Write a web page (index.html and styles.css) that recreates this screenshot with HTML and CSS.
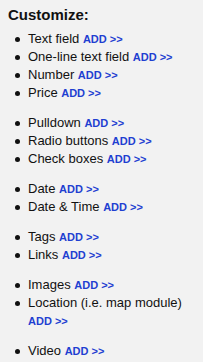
FILE: index.html
```html
<!DOCTYPE html>
<html lang="en">
<head>
    <meta charset="UTF-8">
    <meta name="viewport" content="width=device-width, initial-scale=1.0">
    <title>Customize</title>
    <link rel="stylesheet" href="styles.css">
</head>
<body>
    <div class="panel">
        <h3>Customize:</h3>

        <ul class="field-list">
            <li>Text field <a href="#" class="add-link">ADD &gt;&gt;</a></li>
            <li>One-line text field <a href="#" class="add-link">ADD &gt;&gt;</a></li>
            <li>Number <a href="#" class="add-link">ADD &gt;&gt;</a></li>
            <li>Price <a href="#" class="add-link">ADD &gt;&gt;</a></li>
        </ul>

        <ul class="field-list">
            <li>Pulldown <a href="#" class="add-link">ADD &gt;&gt;</a></li>
            <li>Radio buttons <a href="#" class="add-link">ADD &gt;&gt;</a></li>
            <li>Check boxes <a href="#" class="add-link">ADD &gt;&gt;</a></li>
        </ul>

        <ul class="field-list">
            <li>Date <a href="#" class="add-link">ADD &gt;&gt;</a></li>
            <li>Date &amp; Time <a href="#" class="add-link">ADD &gt;&gt;</a></li>
        </ul>

        <ul class="field-list">
            <li>Tags <a href="#" class="add-link">ADD &gt;&gt;</a></li>
            <li>Links <a href="#" class="add-link">ADD &gt;&gt;</a></li>
        </ul>

        <ul class="field-list">
            <li>Images <a href="#" class="add-link">ADD &gt;&gt;</a></li>
            <li>Location (i.e. map module) <a href="#" class="add-link">ADD &gt;&gt;</a></li>
        </ul>

        <ul class="field-list">
            <li>Video <a href="#" class="add-link">ADD &gt;&gt;</a></li>
        </ul>
    </div>
</body>
</html>
```

FILE: styles.css
```css
* {
    box-sizing: border-box;
    margin: 0;
    padding: 0;
    font-family: 'Liberation Sans', Arial, sans-serif;
}

body {
    background-color: #f2f2f2;
    color: #111;
}

.panel {
    padding: 6px 8px 0 8px;
}

h3 {
    font-size: 15px;
    font-weight: bold;
    line-height: 18px;
    margin-bottom: 6px;
}

.field-list {
    list-style: none;
    padding-left: 20px;
    margin-bottom: 12px;
}

.field-list li {
    position: relative;
    font-size: 13px;
    line-height: 18px;
}

.field-list li::before {
    content: "";
    position: absolute;
    left: -13px;
    top: 7px;
    width: 5px;
    height: 5px;
    border-radius: 50%;
    background-color: #111;
}

.add-link {
    color: #1f3fd1;
    font-size: 11px;
    line-height: 10px;
    font-weight: bold;
    text-decoration: none;
}
```
